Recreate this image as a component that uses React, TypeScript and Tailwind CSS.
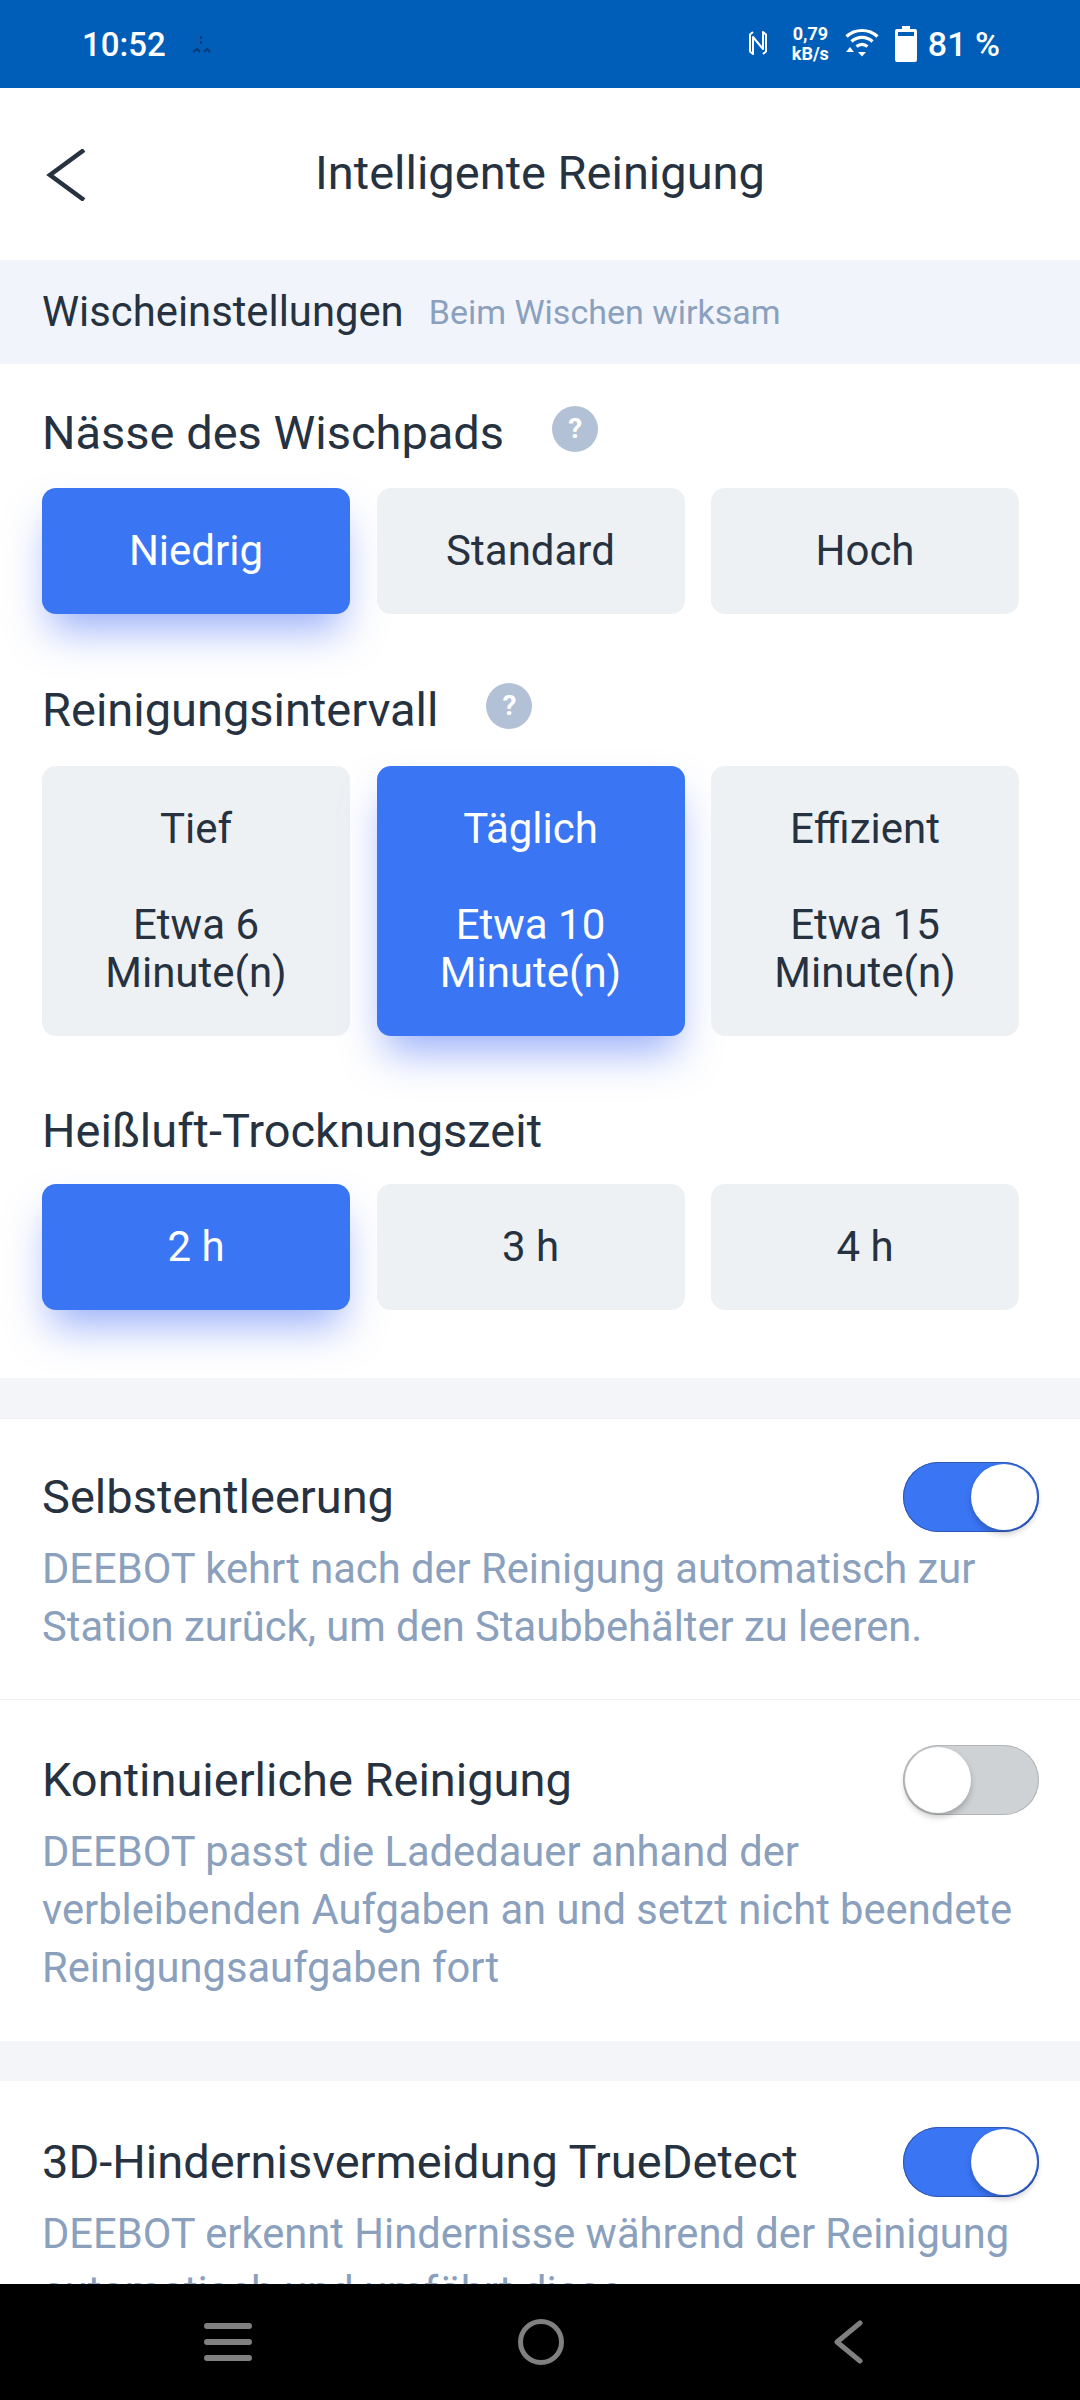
import React from "react";

const font = { fontFamily: "Roboto, sans-serif" };

function Help() {
  return (
    <span className="-mt-[6px] flex h-[46px] w-[46px] items-center justify-center rounded-full bg-[#b2c1d6] text-[28px] font-bold leading-none text-white">?</span>
  );
}

function Opt({ active, h, lines }: { active?: boolean; h: string; lines: React.ReactNode }) {
  return (
    <div
      className={`flex w-[308px] flex-col items-center justify-center rounded-[14px] text-center text-[42px] leading-[48px] ${h} ${
        active ? "bg-[#3a75f4] text-white shadow-[0_24px_40px_-8px_rgba(58,100,244,0.5)]" : "bg-[#eef1f4] text-[#26323f]"
      }`}
    >
      {lines}
    </div>
  );
}

function Toggle({ on }: { on?: boolean }) {
  return (
    <div
      className={`-mr-px flex h-[70px] w-[136px] shrink-0 items-center rounded-full p-[2px] ${
        on ? "justify-end bg-[#3a75f4] shadow-[inset_0_0_0_1px_#2f56b0]" : "justify-start bg-[#ced2d5] shadow-[inset_0_0_0_1px_#b4b6b8]"
      }`}
    >
      <div className="h-[66px] w-[66px] rounded-full bg-white shadow-[0_4px_6px_rgba(0,0,0,0.22)]" />
    </div>
  );
}

function Row({ title, desc, on, h }: { title: string; desc: React.ReactNode; on?: boolean; h: string }) {
  return (
    <div className={`${h} px-[42px]`}>
      <div className="flex h-[70px] items-center justify-between">
        <span className="text-[47px] leading-[50px] text-[#26323f]">{title}</span>
        <Toggle on={on} />
      </div>
      <div className="mt-[8px] text-[41.7px] leading-[58px] text-[#8aa0bd]">{desc}</div>
    </div>
  );
}

export default function App() {
  return (
    <div className="flex h-[2400px] w-[1080px] flex-col overflow-hidden bg-white" style={font}>
      <div className="flex h-[88px] shrink-0 items-center justify-between bg-[#005eb8] pl-[82px] pr-[80px] text-white">
        <div className="flex items-center">
          <span className="text-[33px] font-medium leading-none">10:52</span>
          <svg className="ml-[24px]" width="24" height="24" viewBox="0 0 24 24" fill="none" stroke="#0b3a72" strokeWidth="2">
            <path d="M11 4v3M11 9v3M3 20l4-3 3 3M14 20l3-3 3 3" />
          </svg>
        </div>
        <div className="flex items-center">
          <svg className="-mt-[2px]" width="20" height="28" viewBox="0 0 20 28" fill="none" stroke="white" strokeWidth="2" strokeLinejoin="round">
            <path d="M5 3 2 5.500v17l3 2.500V8l10 12V3l3 2.500v17L15 25" />
          </svg>
          <div className="ml-[24px] flex flex-col items-center text-[18px] font-bold leading-[20px]">
            <span>0,79</span>
            <span>kB/s</span>
          </div>
          <svg className="ml-[16px] -mt-[4px]" width="34" height="30" viewBox="0 0 34 30" fill="none" stroke="white" strokeWidth="3.200">
            <path d="M1.500 9.500C10 1.500 24 1.500 32.500 9.500M6.500 14.500c6-5.500 15-5.500 21 0M11.500 19.500c3.500-2.800 7.500-2.800 11 0" />
            <path d="M17 29.500 l-4-4.500h8z" fill="white" stroke="none" />
            <path d="M1 25h8l-4-5z" fill="white" stroke="none" />
          </svg>
          <svg className="ml-[16px]" width="22" height="36" viewBox="0 0 22 36" fill="white">
            <path d="M7 0h8v3H7z" />
            <path fillRule="evenodd" d="M2 3h18a2 2 0 0 1 2 2v29a2 2 0 0 1-2 2H2a2 2 0 0 1-2-2V5a2 2 0 0 1 2-2zM3 6v4h16V6z" />
          </svg>
          <span className="ml-[11px] whitespace-nowrap text-[34px] font-medium leading-none">81 %</span>
        </div>
      </div>

      <div className="relative flex h-[172px] shrink-0 items-center justify-center">
        <svg className="absolute left-[46px] top-[61px]" width="40" height="52" viewBox="0 0 40 52" fill="none" stroke="#26323f" strokeWidth="4.500">
          <path d="M38 1 4 26l34 25" />
        </svg>
        <span className="-mt-[3px] text-[47px] leading-none text-[#26323f]">Intelligente Reinigung</span>
      </div>

      <div className="flex h-[104px] shrink-0 items-center bg-[#f1f5fb] px-[42px]">
        <span className="-mt-[1px] text-[41.8px] leading-none text-[#26323f]">Wischeinstellungen</span>
        <span className="-mt-[1px] ml-[25px] text-[34px] leading-none text-[#8aa0bd]">Beim Wischen wirksam</span>
      </div>

      <div className="min-h-0 flex-1 overflow-hidden">
        <div className="px-[42px] pt-[44px]">
          <div className="flex h-[48px] items-center gap-[48px]">
            <span className="text-[47px] leading-none text-[#26323f]">Nässe des Wischpads</span>
            <Help />
          </div>
          <div className="mt-[32px] flex gap-[26.5px]">
            <Opt active h="h-[126px]" lines="Niedrig" />
            <Opt h="h-[126px]" lines="Standard" />
            <Opt h="h-[126px]" lines="Hoch" />
          </div>

          <div className="mt-[71px] flex h-[48px] items-center gap-[48px]">
            <span className="text-[47px] leading-none text-[#26323f]">Reinigungsintervall</span>
            <Help />
          </div>
          <div className="mt-[33px] flex gap-[26.5px]">
            {[
              ["Tief", "Etwa 6", false],
              ["Täglich", "Etwa 10", true],
              ["Effizient", "Etwa 15", false],
            ].map(([a, b, on]) => (
              <Opt
                key={a as string}
                active={on as boolean}
                h="h-[270px]"
                lines={
                  <>
                    <span>{a}</span>
                    <span className="mt-[48px]">{b}</span>
                    <span>Minute(n)</span>
                  </>
                }
              />
            ))}
          </div>

          <div className="mt-[70px] flex h-[48px] items-center">
            <span className="text-[47px] leading-none text-[#26323f]">Heißluft-Trocknungszeit</span>
          </div>
          <div className="mt-[30px] flex gap-[26.5px]">
            <Opt active h="h-[126px]" lines="2 h" />
            <Opt h="h-[126px]" lines="3 h" />
            <Opt h="h-[126px]" lines="4 h" />
          </div>
        </div>

        <div className="mt-[68px] h-[40px] bg-[#f3f5f8]" />
        <div className="border-t border-[#eef0f3]" />
        <div className="pt-[43px]">
          <Row
            h="h-[238px] border-b border-[#eef0f3]"
            on
            title="Selbstentleerung"
            desc={
              <>
                DEEBOT kehrt nach der Reinigung automatisch zur
                <br />
                Station zurück, um den Staubbehälter zu leeren.
              </>
            }
          />
          <div className="pt-[45px]">
            <Row
              h="h-[296px]"
              title="Kontinuierliche Reinigung"
              desc={
                <>
                  DEEBOT passt die Ladedauer anhand der
                  <br />
                  verbleibenden Aufgaben an und setzt nicht beendete
                  <br />
                  Reinigungsaufgaben fort
                </>
              }
            />
          </div>
        </div>
        <div className="h-[40px] bg-[#f3f5f8]" />
        <div className="pt-[46px]">
          <Row
            h="h-[300px]"
            on
            title="3D-Hindernisvermeidung TrueDetect"
            desc={
              <>
                DEEBOT erkennt Hindernisse während der Reinigung
                <br />
                automatisch und umfährt diese.
              </>
            }
          />
        </div>
      </div>

      <div className="flex h-[116px] shrink-0 items-center bg-black pl-[204px]">
        <div className="flex w-[659px] items-center justify-between">
          <div className="flex w-[48px] flex-col gap-[10px]">
            <div className="h-[6px] rounded-full bg-[#808080]" />
            <div className="h-[6px] rounded-full bg-[#808080]" />
            <div className="h-[6px] rounded-full bg-[#808080]" />
          </div>
          <div className="-ml-[4px] h-[46px] w-[46px] rounded-full border-[5px] border-[#808080]" />
          <svg width="30" height="44" viewBox="0 0 30 44" fill="none" stroke="#808080" strokeWidth="5" strokeLinecap="round" strokeLinejoin="round">
            <path d="M27 3 4 22l23 19" />
          </svg>
        </div>
      </div>
    </div>
  );
}
